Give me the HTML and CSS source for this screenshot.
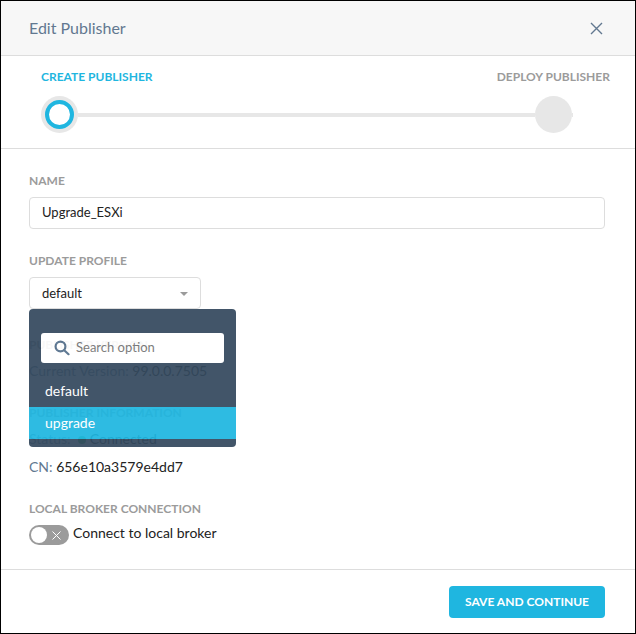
FILE: index.html
```html
<!DOCTYPE html>
<html lang="en">
<head>
<meta charset="utf-8">
<meta name="viewport" content="width=device-width, initial-scale=1">
<title>Edit Publisher</title>
<link rel="stylesheet" href="styles.css">
</head>
<body>
<main class="modal">
  <header class="modal-header">
    <h1 class="modal-title">Edit Publisher</h1>
    <button class="close" type="button" aria-label="Close">
      <svg width="13" height="13" viewBox="0 0 13 13"><path d="M1 1l11 11M12 1L1 12"/></svg>
    </button>
  </header>

  <nav class="stepper">
    <div class="step-labels">
      <span class="step-label active">CREATE PUBLISHER</span>
      <span class="step-label">DEPLOY PUBLISHER</span>
    </div>
    <div class="track">
      <span class="node current"></span>
      <span class="bar"></span>
      <span class="node"></span>
      <span class="tail"></span>
    </div>
  </nav>

  <form class="modal-body">
    <div class="group">
      <label class="caption" for="name">NAME</label>
      <input class="text-input" id="name" type="text" value="Upgrade_ESXi">
    </div>

    <div class="group profile">
      <label class="caption" for="profile">UPDATE PROFILE</label>
      <div class="picker">
        <select class="select" id="profile">
          <option selected>default</option>
          <option>upgrade</option>
        </select>
        <svg class="caret" width="8" height="4" viewBox="0 0 8 4"><path d="M0 0h8L4 4z"/></svg>
        <div class="dropdown">
          <div class="search">
            <svg width="16" height="16" viewBox="0 0 16 16"><circle cx="6.5" cy="6.5" r="4.9"/><path d="M10.2 10.2l4.3 4"/></svg>
            <input class="search-input" type="search" placeholder="Search option" aria-label="Search option">
          </div>
          <button class="option" type="button">default</button>
          <button class="option highlighted" type="button">upgrade</button>
        </div>
      </div>
    </div>

    <section class="group">
      <h2 class="caption">PUBLISHER VERSION</h2>
      <p class="row"><span class="key">Current Version:</span> 99.0.0.7505</p>
    </section>

    <section class="group">
      <h2 class="caption">PUBLISHER INFORMATION</h2>
      <p class="row"><span class="key">Status:</span> <span class="dot"></span> Connected</p>
      <p class="row"><span class="key">CN:</span> 656e10a3579e4dd7</p>
    </section>

    <section class="group">
      <h2 class="caption">LOCAL BROKER CONNECTION</h2>
      <label class="toggle">
        <input class="toggle-input" type="checkbox">
        <span class="switch">
          <span class="knob"></span>
          <svg width="9" height="9" viewBox="0 0 9 9"><path d="M.5.5l8 8M8.5.5l-8 8"/></svg>
        </span>
        <span class="toggle-text">Connect to local broker</span>
      </label>
    </section>
  </form>

  <footer class="modal-footer">
    <button class="primary" type="button">SAVE AND CONTINUE</button>
  </footer>
</main>
</body>
</html>
```
FILE: styles.css
```css
* {
  box-sizing: border-box;
}

body {
  margin: 0;
  background: #fff;
  color: #222;
  font: 14px/20px Lato, "Open Sans", sans-serif;
}

button,
input,
select {
  font: inherit;
  color: inherit;
}

h1,
h2,
p {
  margin: 0;
}

.modal {
  display: flex;
  flex-direction: column;
  min-height: 100vh;
  border: 1px solid #000;
}

.modal-header {
  display: flex;
  align-items: center;
  justify-content: space-between;
  height: 55px;
  padding: 0 28px;
  background: #f7f7f7;
  border-bottom: 1px solid #ddd;
}

.modal-title {
  font-size: 16px;
  font-weight: 400;
  line-height: 26px;
  color: #627890;
}

.close {
  display: flex;
  padding: 4px;
  border: 0;
  background: none;
}

.close svg {
  fill: none;
  stroke: #627890;
  stroke-width: 1.4;
}

.stepper {
  padding: 13px 25px 15px 40px;
  border-bottom: 1px solid #ddd;
}

.step-labels {
  display: flex;
  justify-content: space-between;
  margin-bottom: 11px;
}

.step-label,
.caption {
  display: block;
  font-size: 12px;
  font-weight: 700;
  line-height: 16px;
  color: #9b9b9b;
}

.step-label.active {
  color: #1fb6e0;
}

.track {
  display: flex;
  align-items: center;
  margin-right: 37px;
}

.node {
  flex: none;
  width: 37px;
  height: 37px;
  border-radius: 50%;
  background: #e7e7e7;
}

.node.current {
  display: flex;
  padding: 4px;
}

.node.current::before {
  content: "";
  flex: 1;
  border: 4px solid #1fb6e0;
  border-radius: 50%;
  background: #fff;
}

.bar {
  flex: 1;
  height: 4px;
  background: #e7e7e7;
}

.tail {
  width: 1px;
  height: 4px;
  background: #e7e7e7;
}

.modal-body {
  display: flex;
  flex: 1;
  flex-direction: column;
  gap: 24px;
  padding: 24px 30px 24px 28px;
}

.group {
  display: flex;
  flex-direction: column;
  gap: 8px;
}

.profile {
  margin-bottom: 4px;
}

.text-input,
.select {
  width: 100%;
  height: 32px;
  padding: 0 12px;
  border: 1px solid #ddd;
  border-radius: 4px;
  background: #fff;
  font-size: 13px;
}

.text-input {
  padding-bottom: 2px;
}

.picker {
  position: relative;
  width: 172px;
}

.select {
  display: block;
  appearance: none;
}

.caret {
  position: absolute;
  top: 15px;
  right: 13px;
  fill: #9b9b9b;
  pointer-events: none;
}

.dropdown {
  position: absolute;
  top: 100%;
  left: 0;
  width: 207px;
  padding: 24px 0 8px;
  border-radius: 4px;
  background: #34495e;
  opacity: 0.93;
}

.search {
  display: flex;
  align-items: center;
  gap: 6px;
  height: 30px;
  margin: 0 12px 12px;
  padding: 0 13px;
  border-radius: 3px;
  background: #fff;
}

.search svg {
  flex: none;
  fill: none;
  stroke: #55708c;
  stroke-width: 2.2;
  stroke-linecap: round;
}

.search-input {
  flex: 1;
  min-width: 0;
  padding: 0 0 2px;
  border: 0;
  background: none;
  font-size: 13px;
}

.search-input::placeholder {
  color: #757575;
}

.option {
  display: block;
  width: 100%;
  height: 32px;
  padding: 0 16px;
  border: 0;
  background: none;
  color: #fff;
  text-align: left;
}

.option.highlighted {
  background: #1fb6e0;
}

.key {
  color: #627890;
}

.dot {
  display: inline-block;
  width: 8px;
  height: 8px;
  margin: 0 0 0 4px;
  border-radius: 50%;
  background: #2fb457;
}

.toggle {
  display: flex;
  gap: 4px;
}

.toggle-input {
  position: absolute;
  opacity: 0;
}

.switch {
  display: flex;
  align-items: center;
  justify-content: space-between;
  width: 40px;
  height: 20px;
  padding: 0 8px 0 2px;
  border-radius: 10px;
  background: #9b9b9b;
}

.knob {
  width: 16px;
  height: 16px;
  border-radius: 50%;
  background: #fff;
}

.switch svg {
  fill: none;
  stroke: #fff;
}

.toggle-text {
  line-height: 16px;
}

.modal-footer {
  display: flex;
  justify-content: flex-end;
  padding: 16px 30px 15px;
  border-top: 1px solid #ddd;
}

.primary {
  height: 32px;
  padding: 0 16px;
  border: 0;
  border-radius: 4px;
  background: #1fb6e0;
  color: #fff;
  font-size: 12px;
  font-weight: 700;
}
```
